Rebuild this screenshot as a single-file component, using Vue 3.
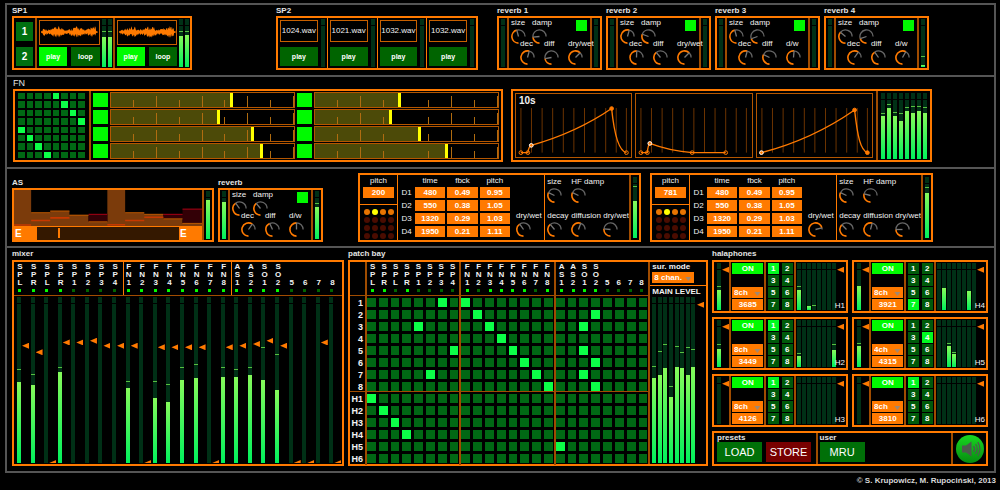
<script setup>
import { h } from 'vue'

// Rotary dial: the angle runs clockwise from six o'clock to three o'clock.
const Knob = (props) => {
  const at = (deg, r) => {
    const t = (deg * Math.PI) / 180
    return `${(7.5 - r * Math.sin(t)).toFixed(2)} ${(7.5 + r * Math.cos(t)).toFixed(2)}`
  }
  const a = props.angle
  return h('svg', { class: 'knob', viewBox: '0 0 15 15', role: 'img', 'aria-label': props.name, fill: 'none' }, [
    h('path', { d: `M${at(a, 6.6)}A6.6 6.6 0 ${270 - a > 180 ? 1 : 0} 1 ${at(270, 6.6)}`, stroke: '#666', 'stroke-width': 1.3 }),
    h('path', { d: `M${at(0, 6.6)}A6.6 6.6 0 ${a > 180 ? 1 : 0} 1 ${at(a, 6.6)}`, stroke: '#ff7a00', 'stroke-width': 1.6 }),
    h('path', { d: `M7.5 7.5L${at(a, 6.6)}`, stroke: '#777', 'stroke-width': 1.3 }),
  ])
}
Knob.props = ['angle', 'name']

const lv = (m) => ({ '--l': (m ? m[0] : 0) + '%', '--p': (m && m[1] ? m[1] : -5) + '%' })

const wave = (seed) => {
  const top = []
  const bottom = []
  for (let i = 0; i <= 116; i++) {
    const n = Math.abs(Math.sin(i * 12.9898 * seed) * 43758.5453) % 1
    const m = Math.abs(Math.sin(i * 78.233 * seed) * 12543.123) % 1
    const e = i < 4 || i > 112 ? 1 : 3.3 + 1.1 * Math.sin(i / 6 + seed * 2)
    top.push(`${i / 2 + 1},${(11.5 - e * (0.4 + n)).toFixed(1)}`)
    bottom.unshift(`${i / 2 + 1},${(11.5 + e * (0.4 + m)).toFixed(1)}`)
  }
  return top.concat(bottom).join(' ')
}
const players = [
  { wave: wave(1), m: [[63, 73], [63, 73]] },
  { wave: wave(1.7), m: [[65, 73], [67, 73]] },
]
const files = ['1024.wav', '1021.wav', '1032.wav', '1032.wav']

const rev = (name, angles, mix, left, right) => ({
  name,
  left,
  right,
  rows: [
    [['size', angles[0]], ['damp', angles[1]]],
    [['dec', angles[2]], ['diff', angles[3]], [mix, angles[4]]],
  ],
})
const reverbs = [
  rev('reverb 1', [165, 85, 195, 80, 225], 'dry/wet'),
  rev('reverb 2', [195, 110, 182, 140, 225], 'dry/wet'),
  rev('reverb 3', [165, 70, 195, 115, 185], 'd/w'),
  rev('reverb 4', [130, 72, 215, 145, 210], 'd/w', null, [4, 20]),
]
const asReverb = rev('reverb', [145, 140, 215, 155, 180], 'd/w', [77], [67, 72])

const fnLit = [4, 5, 6, 7, 0, 1, 2, 3]
const sliders = [66, 46, 59, 41, 78, 57, 83, 72]
const fnMeters = [[65, 68], [77, 82], [65, 70], [57, 68], [72, 78], [69, 79], [72, 79], [70, 77]]
const envelopes = [
  {
    label: '10s',
    d: 'M5 60.5H12Q13 54 15.5 53Q61 40 97 15C100 45 105 59 112 60.5',
    pts: [[5, 60.5, 'o'], [12, 60.5, 'o'], [15.5, 53, 'w'], [97, 15, 'f'], [112, 60.5, 'o']],
  },
  {
    d: 'M5 60.5H11.5Q12 53 14 51Q35 59 57 60.5H91',
    pts: [[5, 60.5, 'o'], [11.5, 60.5, 'o'], [14, 51, 'w'], [57, 60.5, 'o'], [91, 60.5, 'o']],
  },
  {
    d: 'M4.5 60.5Q56 47 99 16.5C102 44 105 58 112 60.5',
    pts: [[4.5, 60.5, 'w'], [99, 16.5, 'f'], [112, 60.5, 'f']],
  },
]
const gridX = [5, 15.7, 26.5, 37.2, 48, 58.7, 69.5, 80.2, 91, 101.7, 112]

const taps = [
  ['D1', '480', '0.49', '0.95'],
  ['D2', '550', '0.38', '1.05'],
  ['D3', '1320', '0.29', '1.03'],
  ['D4', '1950', '0.21', '1.11'],
]
const delays = [
  { pitch: '200', mix: 145, k: [115, 115, 140, 200, 95], m: [61, 84] },
  { pitch: '781', mix: 255, k: [115, 105, 135, 195, 90], m: [74, 82] },
]

const names = ['SPL', 'SPR', 'SPL', 'SPR', 'SP1', 'SP2', 'SP3', 'SP4', 'FN1', 'FN2', 'FN3', 'FN4', 'FN5', 'FN6', 'FN7', 'FN8', 'AS1', 'AS2', 'SO1', 'SO2', '5', '6', '7', '8']
const mixLeds = '111100001111111111110000'
const patchLeds = '110100001011110111110000'
const faders = [72, 68, 0, 74, 74, 75, 72, 72, 72, 0, 71, 71, 71, 71, 0, 71, 72, 73, 75, 72, 0, 0, 74, 0]
const mixLevels = {
  0: [49, 56], 1: [47, 53], 3: [55, 57], 8: [45, 49], 10: [39, 49], 11: [37, 47], 12: [50, 57], 13: [51, 59],
  15: [52, 57], 16: [52, 56], 17: [53, 57], 18: [50, 69], 19: [44, 65],
}
const groups = [0, 8, 16]
const bands = [
  { cls: 'outs', rows: ['1', '2', '3', '4', '5', '6', '7', '8'] },
  { cls: 'halas', rows: ['H1', 'H2', 'H3', 'H4', 'H5', 'H6'] },
]
const routes = {
  1: [6, 8], 2: [9, 19], 3: [4, 10, 18], 4: [11], 5: [7, 12, 18], 6: [13, 19], 7: [5, 14, 18], 8: [15, 19],
  H1: [0], H2: [1], H3: [2], H4: [3], H5: [16], H6: [],
}
const mainLevels = [[51, 58], [53, 67], [57, 71], [40, 46], [58, 70], [57, 66], [53, 69], [58, 68]]

const halas = [
  { id: 'H1', ch: '8ch', n: '3685', on: 1, m: [43, 50], b: { 1: [43, 50], 3: [8], 4: [0, 9] } },
  { id: 'H4', ch: '8ch', n: '3921', on: 7, m: [52], b: { 2: [47], 7: [41] } },
  { id: 'H2', ch: '8ch', n: '3449', on: 1, m: [39, 46], b: { 1: [24, 27], 8: [36, 46] } },
  { id: 'H5', ch: '4ch', n: '4315', on: 4, m: [45, 50], b: { 3: [45, 50], 4: [27, 29] } },
  { id: 'H3', ch: '8ch', n: '4126', on: 1, m: null, b: {} },
  { id: 'H6', ch: '8ch', n: '3810', on: 1, m: null, b: {} },
]
</script>

<template>
  <main class="page">
    <div class="frame">
      <section class="strip players">
        <div class="unit sp1">
          <h2>SP1</h2>
          <div class="panel low">
            <div class="banks">
              <button class="btn">1</button>
              <button class="btn">2</button>
            </div>
            <div v-for="(p, i) in players" :key="i" class="player">
              <div class="deck">
                <svg class="wave" viewBox="0 0 60 24" preserveAspectRatio="none"><polygon :points="p.wave" fill="#ff7a00" /></svg>
                <div class="pair">
                  <button class="btn lit">play</button>
                  <button class="btn">loop</button>
                </div>
              </div>
              <i v-for="(m, j) in p.m" :key="j" class="meter" :style="lv(m)"></i>
            </div>
          </div>
        </div>
        <div class="unit sp2">
          <h2>SP2</h2>
          <div class="panel low">
            <div v-for="(f, i) in files" :key="i" class="clip">
              <div class="deck">
                <span class="file">{{ f }}</span>
                <button class="btn">play</button>
              </div>
              <i class="meter" :style="lv()"></i>
            </div>
          </div>
        </div>
        <div v-for="r in reverbs" :key="r.name" class="unit rev">
          <h2>{{ r.name }}</h2>
          <div class="panel low">
            <div class="side"><i class="meter" :style="lv(r.left)"></i></div>
            <div class="dials">
              <button class="power" :aria-label="r.name + ' on'"></button>
              <div v-for="(row, i) in r.rows" :key="i" class="dialrow">
                <div v-for="k in row" :key="k[0]" class="dial"><span>{{ k[0] }}</span><Knob :angle="k[1]" :name="k[0]" /></div>
              </div>
            </div>
            <div class="side"><i class="meter" :style="lv(r.right)"></i></div>
          </div>
        </div>
      </section>

      <section class="strip functions">
        <div class="unit fn">
          <h2 class="plain">FN</h2>
          <div class="panel mid">
            <div class="steps">
              <template v-for="(lit, r) in fnLit" :key="r">
                <button v-for="c in 8" :key="c" class="cell" :class="{ lit: c - 1 === lit }" :aria-label="'step ' + (r + 1) + ' ' + c"></button>
              </template>
            </div>
            <div class="sliders">
              <template v-for="(v, i) in sliders" :key="i">
                <button class="gate" :aria-label="'FN ' + (i + 1) + ' on'"></button>
                <input class="slider" type="range" :value="v" :aria-label="'FN ' + (i + 1)" :style="{ '--v': v + '%' }" />
              </template>
            </div>
          </div>
        </div>
        <div class="unit env">
          <div class="panel mid">
            <div v-for="(e, i) in envelopes" :key="i" class="curve">
              <svg viewBox="0 0 117 65" preserveAspectRatio="none" fill="none">
                <path v-for="x in gridX" :key="x" :d="`M${x} 14.5V60.5`" stroke="#6e3400" />
                <path :d="e.d" stroke="#ff7a00" stroke-width="1.4" />
                <circle v-for="(p, j) in e.pts" :key="j" :cx="p[0]" :cy="p[1]" r="1.9" :fill="p[2] === 'o' ? 'none' : '#ff7a00'" :stroke="p[2] === 'w' ? '#fff' : '#ff7a00'" stroke-width="1" />
              </svg>
              <b v-if="e.label">{{ e.label }}</b>
            </div>
            <div class="bank"><i v-for="(m, i) in fnMeters" :key="i" class="meter" :style="lv(m)"></i></div>
          </div>
        </div>
      </section>

      <section class="strip effects">
        <div class="unit as">
          <h2>AS</h2>
          <div class="panel low">
            <div class="sampler">
              <svg viewBox="38 74 570 111" preserveAspectRatio="none">
                <path fill="#7b3b0b" d="M38 74H90V144H148V138H206V150H264V172H321V74H375V144H433V148H491V162H549V176H608V185H38Z" />
                <path fill="#330006" d="M264 148H321V172H264ZM491 148H549V161H491ZM549 132H608V176H549Z" />
                <path fill="none" stroke="#b85600" stroke-width="3" d="M90 144H148M148 139H206M206 152H264M264 172H321M375 144H433M433 149H491M491 163H549M549 177H608" />
                <path fill="none" stroke="#c63800" stroke-width="5" d="M38 182H90M90 168H148M148 160H206M321 181H375M375 168H433M433 158H491" />
                <path fill="none" stroke="#a80014" stroke-width="3" d="M264 149H321M491 149H549M549 133H608" />
              </svg>
              <div class="loopbar">
                <button>E</button>
                <span class="track"><i></i></span>
                <button>E</button>
              </div>
            </div>
            <div class="side"><i class="meter" :style="lv([82])"></i></div>
          </div>
        </div>
        <div class="unit rev">
          <h2>{{ asReverb.name }}</h2>
          <div class="panel low">
            <div class="side"><i class="meter" :style="lv(asReverb.left)"></i></div>
            <div class="dials">
              <button class="power" aria-label="reverb on"></button>
              <div v-for="(row, i) in asReverb.rows" :key="i" class="dialrow">
                <div v-for="k in row" :key="k[0]" class="dial"><span>{{ k[0] }}</span><Knob :angle="k[1]" :name="k[0]" /></div>
              </div>
            </div>
            <div class="side"><i class="meter" :style="lv(asReverb.right)"></i></div>
          </div>
        </div>
        <div v-for="(d, i) in delays" :key="i" class="unit delay">
          <div class="panel tall">
            <div class="tune">
              <label>pitch<input class="num" :value="d.pitch" /></label>
              <div class="lamps"><i v-for="n in 16" :key="n" :class="{ top: n < 5, hot: n === 2 }"></i></div>
            </div>
            <table class="taps">
              <thead>
                <tr><td></td><th scope="col">time</th><th scope="col">fbck</th><th scope="col">pitch</th></tr>
              </thead>
              <tbody>
                <tr v-for="t in taps" :key="t[0]">
                  <th scope="row">{{ t[0] }}</th>
                  <td v-for="c in [1, 2, 3]" :key="c"><input class="num" :value="t[c]" :aria-label="t[0] + ' value ' + c" /></td>
                </tr>
              </tbody>
            </table>
            <div class="tapmix"><div class="dial"><span>dry/wet</span><Knob :angle="d.mix" name="dry/wet" /></div></div>
            <div class="room">
              <div class="dial"><span>size</span><Knob :angle="d.k[0]" name="size" /></div>
              <div class="dial"><span>HF damp</span><Knob :angle="d.k[1]" name="HF damp" /></div>
              <div class="dial"><span>decay</span><Knob :angle="d.k[2]" name="decay" /></div>
              <div class="dial"><span>diffusion</span><Knob :angle="d.k[3]" name="diffusion" /></div>
              <div class="dial"><span>dry/wet</span><Knob :angle="d.k[4]" name="dry/wet" /></div>
            </div>
            <div class="side wide"><i class="meter" :style="lv(d.m)"></i></div>
          </div>
        </div>
      </section>

      <section class="strip desk">
        <div class="unit mixer">
          <h2>mixer</h2>
          <div class="panel big">
            <div class="names">
              <div v-for="(n, i) in names" :key="i" class="name" :class="{ first: i === 8 || i === 16 }">
                <span><b v-for="(c, j) in n" :key="j">{{ c }}</b></span><i :class="{ on: mixLeds[i] === '1' }"></i>
              </div>
            </div>
            <div class="channels">
              <div v-for="(n, i) in names" :key="i" class="channel">
                <i class="meter" :style="lv(mixLevels[i])"></i>
                <input class="fader" type="range" :value="faders[i]" :aria-label="n + ' fader'" />
              </div>
            </div>
          </div>
        </div>

        <div class="unit patch">
          <h2>patch bay</h2>
          <div class="panel big">
            <div class="bay">
              <div class="corner"></div>
              <div v-for="g in groups" :key="g" class="names grp">
                <div v-for="k in 8" :key="k" class="name">
                  <span><b v-for="(c, j) in names[g + k - 1]" :key="j">{{ c }}</b></span><i :class="{ on: patchLeds[g + k - 1] === '1' }"></i>
                </div>
              </div>
              <template v-for="band in bands" :key="band.cls">
                <div class="rows" :class="band.cls"><span v-for="r in band.rows" :key="r">{{ r }}</span></div>
                <div v-for="g in groups" :key="g" class="cells grp" :class="band.cls">
                  <template v-for="r in band.rows" :key="r">
                    <button v-for="k in 8" :key="k" class="cell" :class="{ lit: routes[r].includes(g + k - 1) }" :aria-label="names[g + k - 1] + ' to ' + r"></button>
                  </template>
                </div>
              </template>
            </div>
            <div class="level">
              <div class="mode">
                <label for="mode">sur. mode</label>
                <span class="pick"><select id="mode"><option>8 chan.</option></select></span>
              </div>
              <div class="caption">MAIN LEVEL</div>
              <div class="mains">
                <i v-for="(m, i) in mainLevels" :key="i" class="meter" :style="lv(m)"></i>
                <input class="fader" type="range" value="97" aria-label="main level" />
              </div>
            </div>
          </div>
        </div>

        <div class="unit hala">
          <h2>halaphones</h2>
          <div class="stack">
            <div v-for="u in halas" :key="u.id" class="panel unitbox">
              <div class="gain">
                <i class="meter" :style="lv(u.m)"></i>
                <input class="fader" type="range" value="91" :aria-label="u.id + ' input'" />
              </div>
              <div class="setup">
                <button class="btn lit">ON</button>
                <span class="pick"><select :aria-label="u.id + ' channels'"><option>{{ u.ch }}</option></select></span>
                <input class="num" :value="u.n" :aria-label="u.id + ' time'" />
              </div>
              <div class="keys">
                <button v-for="n in 8" :key="n" class="btn" :class="{ lit: n === u.on }">{{ n }}</button>
              </div>
              <div class="outbank">
                <i v-for="n in 8" :key="n" class="meter" :style="lv(u.b[n])"></i>
                <input class="fader" type="range" value="91" :aria-label="u.id + ' output'" />
                <span class="tag">{{ u.id }}</span>
              </div>
            </div>
            <div class="panel presets">
              <div class="set">
                <h3>presets</h3>
                <div class="pair"><button class="btn">LOAD</button><button class="btn store">STORE</button></div>
              </div>
              <div class="set user">
                <h3>user</h3>
                <div class="pair"><button class="btn">MRU</button></div>
              </div>
              <div class="sound">
                <button aria-label="sound">
                  <svg viewBox="0 0 28 28" fill="none">
                    <path d="M6 10.5H10L15.5 6.5V21.5L10 17.5H6Z" fill="#4c5a4c" />
                    <path d="M17.5 11.2Q19.6 14 17.5 16.8M19.6 9Q23 14 19.6 19M21.8 7.2Q26 14 21.8 20.8" stroke="#4c5a4c" stroke-width="1.3" />
                  </svg>
                </button>
              </div>
            </div>
          </div>
        </div>
      </section>
    </div>
    <footer>© S. Krupowicz, M. Rupociński, 2013</footer>
  </main>
</template>

<style>
html,
body {
  background: #000;
}
</style>

<style scoped>
.page {
  --orange: #ff7a00;
  --rust: #a04c00;
  box-sizing: border-box;
  min-height: 100vh;
  padding: 3px 4px 0 5px;
  background: #000;
  color: #f2f2f2;
  font: 8px/10px 'Liberation Sans', Arial, sans-serif;
}
.page *,
.page *::before,
.page *::after {
  box-sizing: border-box;
}
button,
input,
select {
  margin: 0;
  padding: 0;
  border: 0;
  border-radius: 0;
  min-width: 0;
  color: #fff;
  font: bold 8px/10px 'Liberation Sans', Arial, sans-serif;
}
h2,
h3 {
  margin: 0;
  font-size: 8px;
  line-height: 11px;
  font-weight: bold;
  white-space: nowrap;
  color: #e4e4e4;
}
h2.plain {
  font-size: 9px;
  line-height: 12px;
  font-weight: normal;
}
.frame {
  border: 2px solid #555;
}
.strip {
  display: flex;
  align-items: flex-end;
  padding: 0 0 5px 5px;
}
.strip + .strip {
  border-top: 2px solid #555;
}
.unit {
  min-width: 0;
}
.panel {
  display: flex;
  border: 2px solid var(--orange);
}
.low {
  height: 54px;
}
.mid {
  height: 73px;
}
.tall {
  height: 69px;
}
.big {
  height: 206px;
}

/* widths */
.players {
  padding-right: 65px;
}
.sp1 {
  flex: 180 1 0;
}
.sp2 {
  flex: 202 1 0;
  margin: 0 19px 0 84px;
}
.rev {
  flex: 105 1 0;
}
.rev + .rev {
  margin-left: 4px;
}
.functions {
  padding-left: 6px;
  padding-right: 62px;
}
.fn {
  flex: 490 1 0;
}
.env {
  flex: 421 1 0;
  margin-left: 8px;
}
.effects {
  padding-top: 4px;
  padding-bottom: 4px;
  padding-right: 61px;
}
.as {
  flex: 202 1 0;
  margin-right: 4px;
}
.delay {
  flex: 283 1 0;
  margin-left: 9px;
}
.effects .rev {
  margin-right: 26px;
}
.effects h2 {
  line-height: 10px;
}
.desk {
  gap: 4px;
  padding-right: 6px;
}
.desk h2 {
  line-height: 12px;
}
.mixer {
  flex: 332 1 0;
}
.patch {
  flex: 360 1 0;
}
.hala {
  flex: 276 1 0;
}

/* meters */
.meter {
  position: relative;
  display: block;
  flex: 0 0 4px;
  width: 4px;
  overflow: hidden;
  background: linear-gradient(#000, #000) 0 6px / 100% 1px no-repeat #003016;
}
.meter::before {
  content: '';
  position: absolute;
  left: 0;
  right: 0;
  bottom: 0;
  height: var(--l);
  background: linear-gradient(#86fa5a, #00f05c);
}
.meter::after {
  content: '';
  position: absolute;
  left: 0;
  right: 0;
  bottom: var(--p);
  height: 1px;
  background: #58c040;
}
.side {
  display: flex;
  justify-content: center;
  flex: 0 0 10px;
  padding: 1px 0;
  border-left: 2px solid var(--rust);
}
.side:first-child {
  border-left: 0;
  border-right: 2px solid var(--rust);
}
.side.wide {
  padding: 2px 0;
}

/* buttons */
.btn {
  background: #006400;
}
.btn.lit {
  background: #00fa00;
}
.btn.store {
  background: #780000;
}
.pair {
  display: flex;
  gap: 4px;
}
.banks {
  display: flex;
  flex-direction: column;
  gap: 6px;
  flex: 0 0 21px;
  padding: 4px 2px 2px;
}
.banks .btn {
  flex: 1;
  font-size: 10px;
  background: #007010;
}
.player {
  display: flex;
  flex: 1;
  gap: 2px;
  padding: 1px 1px 1px 2px;
  border-left: 2px solid var(--rust);
}
.deck {
  display: flex;
  flex-direction: column;
  flex: 1;
  min-width: 0;
  gap: 2px;
  padding: 1px 0;
}
.deck .btn {
  flex: 1;
  height: 19px;
  font-size: 7px;
}
.wave {
  width: 100%;
  height: 26px;
  border: 1px solid #c86000;
}
.clip {
  display: flex;
  flex: 1;
  min-width: 0;
  gap: 3px;
  padding: 1px 2px;
}
.clip + .clip {
  border-left: 1px solid var(--orange);
}
.clip .deck {
  gap: 4px;
}
.clip .btn {
  flex: none;
  margin-top: 1px;
}
.file {
  height: 22px;
  line-height: 20px;
  text-align: center;
  white-space: nowrap;
  border: 1px solid #c86000;
}

/* dials */
.dials {
  position: relative;
  flex: 1;
  min-width: 0;
}
.dialrow {
  display: flex;
  padding-left: 2px;
}
.dialrow + .dialrow {
  margin-top: -5px;
  padding-left: 11px;
}
.dialrow .dial {
  flex: 0 0 21px;
}
.dialrow + .dialrow .dial {
  flex-basis: 24px;
}
.dial {
  display: flex;
  flex-direction: column;
  white-space: nowrap;
}
.dial span {
  height: 11px;
  line-height: 9px;
}
.knob {
  display: block;
  width: 15px;
  height: 15px;
}
.power {
  position: absolute;
  top: 2px;
  right: 3px;
  width: 11px;
  height: 11px;
  background: #00fa00;
}

/* step grid and sliders */
.cell {
  background: #006814;
}
.cell.lit {
  background: #0cff48;
}
.steps {
  display: grid;
  grid-template: repeat(8, 1fr) / repeat(8, 1fr);
  gap: 2px;
  flex: 0 0 74px;
  padding: 2px 4px 2px 3px;
}
.sliders {
  display: grid;
  grid-template-columns: 15px 1fr 15px 1fr;
  gap: 1px 2px;
  flex: 1;
  min-width: 0;
  padding: 1px 2px;
  border-left: 2px solid var(--rust);
}
.gate {
  margin: 1px 0;
  background: #00fa00;
}
.slider {
  appearance: none;
  width: 100%;
  height: 100%;
  border: 1px solid #b45600;
  background:
    repeating-linear-gradient(90deg, transparent 0 calc(25% - 1px), #b06c10 calc(25% - 1px) 25%) 0 100% / 100% 11px no-repeat,
    repeating-linear-gradient(90deg, transparent 0 calc(12.5% - 1px), #b06c10 calc(12.5% - 1px) 12.5%) 0 100% / 100% 7px no-repeat,
    linear-gradient(#4c4a08, #4c4a08) 0 0 / var(--v) 100% no-repeat,
    #000;
}
.slider::-webkit-slider-thumb {
  appearance: none;
  width: 3px;
  height: 14px;
  background: #ffff00;
}
.env .panel {
  padding-left: 2px;
}
.curve {
  position: relative;
  flex: 1;
  min-width: 0;
  margin: 2px 3px 2px 0;
  border: 1px solid #b45600;
}
.curve svg {
  display: block;
  width: 100%;
  height: 100%;
}
.curve b {
  position: absolute;
  left: 3px;
  top: 1px;
  font-size: 10px;
  line-height: 12px;
}
.bank {
  display: flex;
  justify-content: space-between;
  flex: 0 0 54px;
  padding: 2px 3px 1px;
  border-left: 2px solid var(--rust);
}

/* sampler */
.sampler {
  display: flex;
  flex-direction: column;
  flex: 1;
  min-width: 0;
}
.sampler svg {
  display: block;
  width: 100%;
  height: 36px;
}
.loopbar {
  display: flex;
  flex: 1;
  padding-top: 1px;
  background: var(--orange);
}
.loopbar button {
  flex: 0 0 23px;
  padding-left: 1px;
  text-align: left;
  font-size: 10px;
  background: var(--orange);
}
.track {
  flex: 1;
  padding: 1px 0 1px 21px;
  background: #341800;
}
.track i {
  display: block;
  width: 2px;
  height: 10px;
  background: var(--orange);
}

/* delays */
.num {
  width: 100%;
  text-align: center;
  background: var(--orange);
}
.tune {
  display: flex;
  flex-direction: column;
  flex: 0 0 38px;
  text-align: center;
  border-right: 1px solid var(--orange);
}
.tune label {
  height: 30px;
  padding: 1px 3px 0;
  border-bottom: 1px solid var(--orange);
}
.tune .num {
  display: block;
  height: 11px;
  margin-top: 1px;
}
.lamps {
  display: grid;
  grid-template-columns: repeat(4, 6px);
  gap: 2px;
  justify-content: center;
  padding-top: 4px;
}
.lamps i {
  height: 6px;
  border-radius: 3px;
  background: #4a0c00;
}
.lamps .top {
  background: #e87400;
}
.lamps .hot {
  background: #ffff00;
}
.taps {
  flex: none;
  align-self: flex-start;
  width: 114px;
  table-layout: fixed;
  border-spacing: 2px;
  border-collapse: separate;
}
.taps th,
.taps td {
  padding: 0;
  font-weight: normal;
  text-align: center;
  line-height: 8px;
}
.taps td:first-child,
.taps th[scope='row'] {
  width: 13px;
}
.taps .num {
  display: block;
  height: 11px;
}
.tapmix {
  display: flex;
  align-items: flex-end;
  flex: 30 1 0;
  min-width: 0;
  padding: 0 0 3px 4px;
}
.room {
  display: grid;
  grid-template-columns: 24px 32px 1fr;
  grid-template-rows: 1fr auto;
  flex: 87 1 0;
  min-width: 0;
  padding: 2px 0 3px 2px;
  border-left: 1px solid var(--orange);
}
.room .dial:nth-child(n + 3) {
  grid-row: 2;
}

/* channel names */
.names {
  display: grid;
  grid-auto-flow: column;
  grid-auto-columns: 1fr;
  height: 34px;
  border-bottom: 1px solid var(--rust);
}
.name {
  display: flex;
  flex-direction: column;
  justify-content: space-between;
  align-items: center;
  padding: 0 0 3px;
}
.name span {
  display: flex;
  flex-direction: column;
  justify-content: flex-end;
  height: 25px;
  text-align: center;
}
.name b {
  line-height: 8px;
}
.name i {
  width: 3px;
  height: 3px;
  background: #006400;
}
.name .on {
  background: #00fa00;
}
.mixer .panel {
  flex-direction: column;
}
.mixer .names {
  flex: none;
}
.mixer .names,
.channels {
  padding-right: 2px;
}
.mixer .name {
  align-items: flex-start;
  padding-left: 3px;
}
.mixer .name span {
  width: 6px;
}
.mixer .name i {
  margin-left: 1px;
}
.mixer .first {
  box-shadow: inset 1px 0 var(--orange);
}
.channels {
  display: grid;
  grid-auto-flow: column;
  grid-auto-columns: 1fr;
  grid-template-rows: minmax(0, 1fr);
  flex: 1 1 0;
  min-height: 0;
  padding-top: 1px;
  padding-bottom: 1px;
}
.channel {
  display: flex;
  gap: 1px;
  min-width: 0;
  min-height: 0;
  overflow-x: visible;
  overflow-y: clip;
  padding-left: 3px;
}
.fader {
  appearance: none;
  flex: none;
  width: 7px;
  height: 100%;
  background: transparent;
  writing-mode: vertical-lr;
  direction: rtl;
}
.channel .fader {
  height: calc(100% + 3px);
}
.fader::-webkit-slider-thumb {
  appearance: none;
  width: 7px;
  height: 6px;
  background: var(--orange);
  clip-path: polygon(0 50%, 100% 0, 100% 100%);
}

/* patch bay */
.bay {
  display: grid;
  grid-template-columns: 15px 1fr 1fr 1fr;
  grid-template-rows: 34px 96px 1fr;
  flex: 300 1 0;
  min-width: 0;
}
.corner {
  border-bottom: 1px solid var(--rust);
}
.grp {
  min-width: 0;
  padding-right: 1px;
  border-left: 2px solid var(--rust);
}
.cells {
  display: grid;
  grid-template-columns: repeat(8, 1fr);
  grid-auto-rows: 9px;
  gap: 3px;
  padding-top: 2px;
}
.rows {
  display: flex;
  flex-direction: column;
  padding: 1px 2px 0 0;
  text-align: right;
  font-weight: bold;
  font-size: 9px;
  line-height: 12px;
}
.outs {
  border-bottom: 1px solid var(--rust);
}
.level {
  display: flex;
  flex-direction: column;
  flex: 56 1 0;
  min-width: 0;
  min-height: 0;
  border-left: 2px solid var(--rust);
  font-weight: bold;
  white-space: nowrap;
}
.mode {
  display: flex;
  flex-direction: column;
  flex: none;
  height: 24px;
  padding-left: 2px;
  border-bottom: 1px solid var(--orange);
}
.mode .pick {
  width: 42px;
}
.pick {
  position: relative;
  display: flex;
  height: 11px;
}
.pick::after {
  content: '';
  position: absolute;
  right: 3px;
  top: 5px;
  width: 6px;
  height: 4px;
  background: #a08870;
  clip-path: polygon(0 0, 100% 0, 50% 100%);
  pointer-events: none;
}
.pick select {
  appearance: none;
  width: 100%;
  padding-left: 2px;
  background: var(--orange);
}
.caption {
  flex: none;
  height: 11px;
  padding-left: 2px;
  line-height: 11px;
}
.mains,
.outbank {
  display: grid;
  grid-template-columns: repeat(8, 1fr) 9px;
  grid-template-rows: minmax(0, 1fr);
  min-height: 0;
}
.mains {
  flex: 1 1 0;
  padding: 0 0 1px 2px;
}

/* halaphones */
.stack {
  display: grid;
  grid-template-columns: 1fr 1fr;
  grid-template-rows: repeat(3, 53px) 35px;
  gap: 4px;
}
.unitbox {
  min-width: 0;
}
.gain {
  display: flex;
  gap: 1px;
  flex: 0 0 15px;
  padding: 1px 0 1px 3px;
}
.setup {
  display: flex;
  flex-direction: column;
  gap: 1px;
  flex: 34 1 0;
  padding: 1px;
  border-left: 2px solid var(--rust);
}
.setup .btn {
  height: 11px;
  margin-bottom: auto;
}
.setup .num {
  height: 11px;
}
.keys {
  display: grid;
  grid-template-columns: 11px 11px;
  gap: 1px 3px;
  justify-content: center;
  flex: 30 1 0;
  padding: 1px 0;
  border-left: 2px solid var(--rust);
}
.keys .btn {
  background: #005a0a;
}
.keys .lit {
  background: #00fa20;
}
.outbank {
  position: relative;
  flex: 53 1 0;
  min-width: 0;
  padding: 1px 0 1px 1px;
  border-left: 2px solid var(--rust);
}
.tag {
  position: absolute;
  right: 1px;
  bottom: 0;
  font-size: 8px;
}
.presets {
  grid-column: 1 / -1;
}
.set {
  display: flex;
  flex-direction: column;
  flex: 102 1 0;
  padding-left: 3px;
}
.user {
  flex-grow: 136;
  padding-left: 2px;
  border-left: 2px solid var(--rust);
}
.set h3 {
  line-height: 9px;
}
.set .btn {
  flex: 0 0 45px;
  height: 20px;
  font-size: 11px;
  font-weight: normal;
  background: #007008;
}
.set .store {
  background: #780000;
}
.sound {
  display: flex;
  align-items: center;
  justify-content: center;
  flex: 0 0 35px;
  border-left: 2px solid var(--rust);
}
.sound button {
  width: 28px;
  height: 28px;
  border-radius: 50%;
  background: linear-gradient(#18d820, #058c10);
}
.sound svg {
  display: block;
  width: 28px;
  height: 28px;
}
footer {
  padding-top: 3px;
  text-align: right;
  font-weight: bold;
  color: #d8d8d8;
}
</style>
